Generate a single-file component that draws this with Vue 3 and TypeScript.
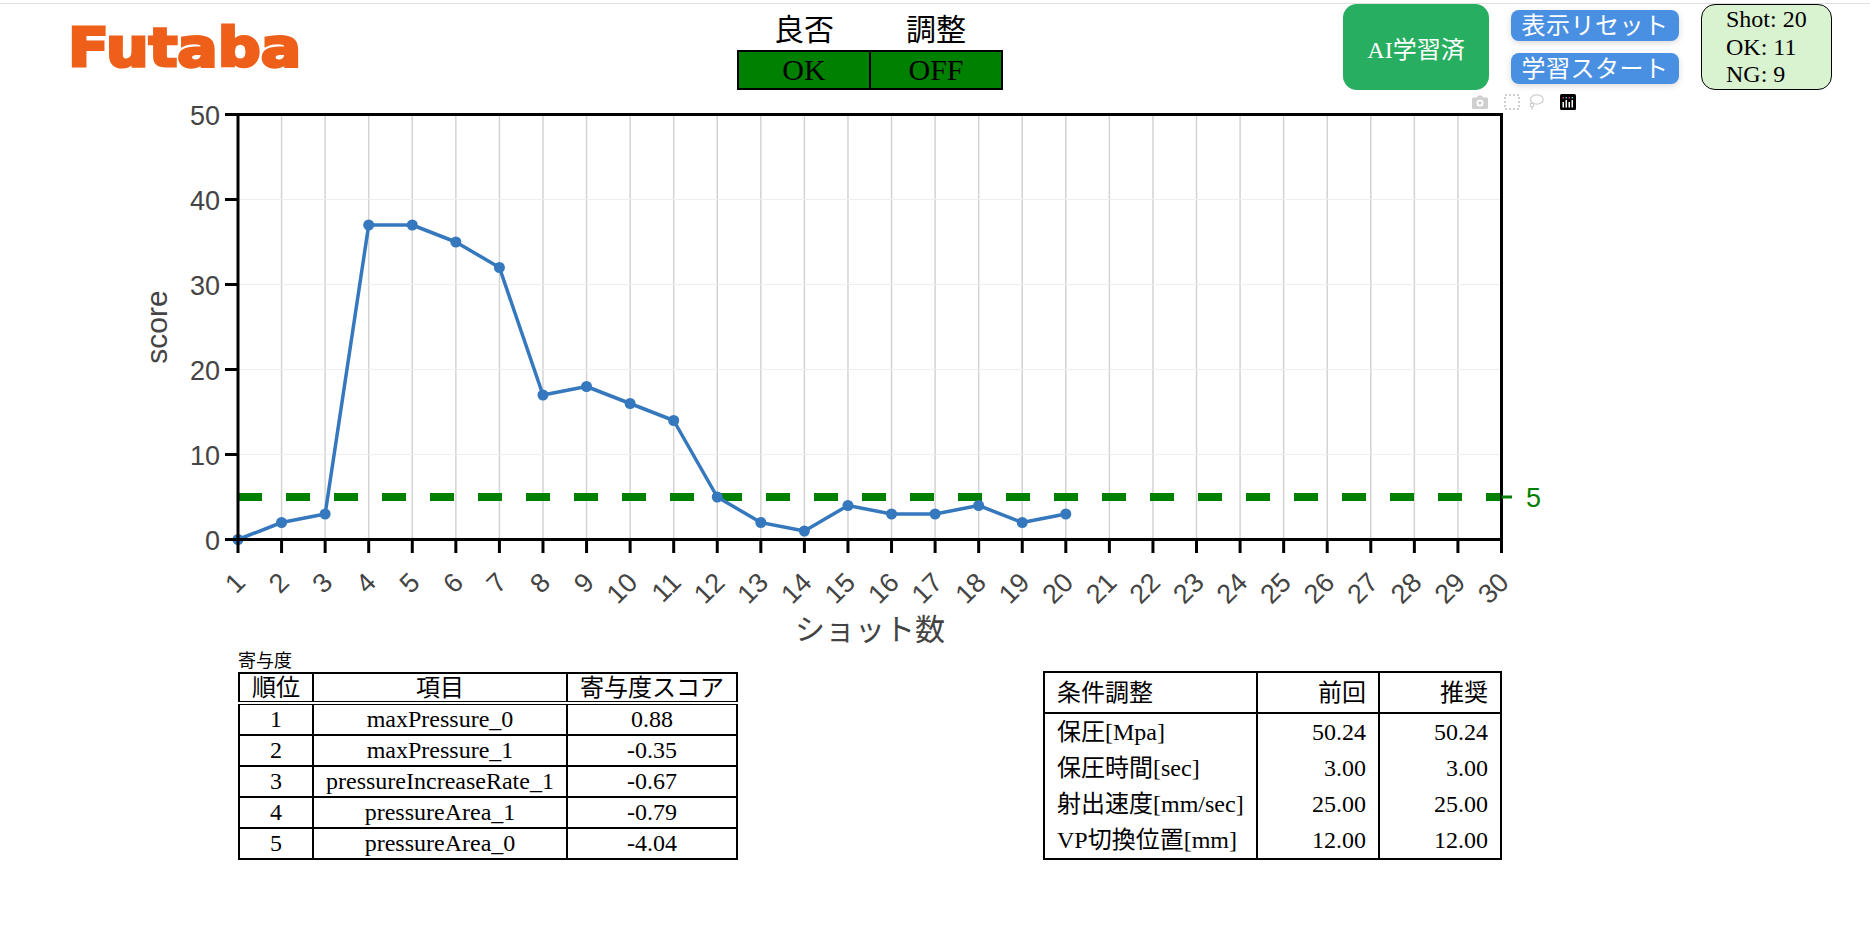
<script setup lang="ts">
/**
 * Score dashboard - header status, score chart, result tables
 */

import { computed } from 'vue'

const PLOT_LEFT = 238
const PLOT_RIGHT = 1501.5
const PLOT_TOP = 24.5
const PLOT_BOTTOM = 449.5

const scores = [0, 2, 3, 37, 37, 35, 32, 17, 18, 16, 14, 5, 2, 1, 4, 3, 3, 4, 2, 3]
const threshold = 5

function xAt(shot: number) {
  return PLOT_LEFT + ((shot - 1) * (PLOT_RIGHT - PLOT_LEFT)) / 29
}

function yAt(score: number) {
  return PLOT_BOTTOM - (score * (PLOT_BOTTOM - PLOT_TOP)) / 50
}

const shots = Array.from({ length: 30 }, (_, i) => i + 1)
const yTicks = [0, 10, 20, 30, 40, 50]

const points = computed(() => scores.map((s, i) => ({ x: xAt(i + 1), y: yAt(s) })))
const linePoints = computed(() => points.value.map((p) => `${p.x},${p.y}`).join(' '))

const contributions = [
  { rank: 1, name: 'maxPressure_0', score: '0.88' },
  { rank: 2, name: 'maxPressure_1', score: '-0.35' },
  { rank: 3, name: 'pressureIncreaseRate_1', score: '-0.67' },
  { rank: 4, name: 'pressureArea_1', score: '-0.79' },
  { rank: 5, name: 'pressureArea_0', score: '-4.04' },
]

const conditions = [
  { name: '保圧[Mpa]', prev: '50.24', next: '50.24' },
  { name: '保圧時間[sec]', prev: '3.00', next: '3.00' },
  { name: '射出速度[mm/sec]', prev: '25.00', next: '25.00' },
  { name: 'VP切換位置[mm]', prev: '12.00', next: '12.00' },
]
</script>

<template>
  <div class="page">
    <header class="header">
      <div class="logo">Futaba</div>

      <table class="status">
        <thead>
          <tr>
            <th>良否</th>
            <th>調整</th>
          </tr>
        </thead>
        <tbody>
          <tr>
            <td>OK</td>
            <td>OFF</td>
          </tr>
        </tbody>
      </table>

      <div class="ai-badge">AI学習済</div>

      <div class="actions">
        <button class="action">表示リセット</button>
        <button class="action">学習スタート</button>
      </div>

      <div class="counts">
        <div>Shot: 20</div>
        <div>OK: 11</div>
        <div>NG: 9</div>
      </div>
    </header>

    <div class="chart">
      <div class="modebar">
        <svg class="mode-icon mode-camera" viewBox="0 0 16 14">
          <path fill-rule="evenodd" d="M1.5 2.5H5L6 .5h4l1 2h3.5q1.5 0 1.5 1.5v8.5q0 1.5-1.5 1.5h-13Q0 14 0 12.500V4q0-1.500 1.500-1.500zM8 4.500a3.500 3.500 0 1 0 0 7 3.500 3.500 0 0 0 0-7zM8 6.200a1.800 1.800 0 1 1 0 3.600 1.800 1.800 0 0 1 0-3.600z" />
        </svg>
        <svg class="mode-icon mode-select" viewBox="0 0 16 16">
          <rect x="1" y="1" width="14" height="14" fill="none" stroke-width="2" stroke-dasharray="2 2" />
        </svg>
        <svg class="mode-icon mode-lasso" viewBox="0 0 16 16">
          <ellipse cx="8.800" cy="5.500" rx="6.400" ry="4.600" fill="none" stroke-width="1.300" />
          <circle cx="4" cy="11" r="1.800" fill="none" stroke-width="1.300" />
          <path d="M4 12.800c.6 1 .4 2-.6 2.700" fill="none" stroke-width="1.300" />
        </svg>
        <svg class="mode-logo" viewBox="0 0 16 16">
          <rect width="16" height="16" rx="1.500" fill="#000" />
          <g fill="#fff">
            <rect x="2.500" y="8" width="1.500" height="5.500" />
            <rect x="5.500" y="6" width="1.500" height="7.500" />
            <rect x="8.500" y="8" width="1.500" height="5.500" />
            <rect x="11.500" y="6" width="1.500" height="7.500" />
          </g>
          <g fill="#e6397a">
            <rect x="2.500" y="3" width="1.500" height="1.500" />
            <rect x="8.500" y="3" width="1.500" height="1.500" />
          </g>
          <g fill="#54b5e8">
            <rect x="5.500" y="3" width="1.500" height="1.500" />
            <rect x="11.500" y="3" width="1.500" height="1.500" />
          </g>
        </svg>
      </div>

      <svg class="plot" width="1870" height="560" viewBox="0 0 1870 560">
        <!-- grid -->
        <line v-for="s in shots" :key="'gx' + s" :x1="xAt(s)" :x2="xAt(s)" :y1="PLOT_TOP" :y2="PLOT_BOTTOM" stroke="#d3d3d3" stroke-width="1.500" />
        <line v-for="t in yTicks" :key="'gy' + t" :x1="PLOT_LEFT" :x2="PLOT_RIGHT" :y1="yAt(t)" :y2="yAt(t)" stroke="#eeeeee" stroke-width="1" />

        <!-- threshold -->
        <line :x1="PLOT_LEFT" :x2="PLOT_RIGHT" :y1="yAt(threshold)" :y2="yAt(threshold)" stroke="#008000" stroke-width="8" stroke-dasharray="24 24" />

        <!-- score trace -->
        <polyline :points="linePoints" fill="none" stroke="#3578bd" stroke-width="3.500" stroke-linejoin="round" />
        <circle v-for="(p, i) in points" :key="'pt' + i" :cx="p.x" :cy="p.y" r="5.500" fill="#3578bd" />

        <!-- frame -->
        <rect :x="PLOT_LEFT" :y="PLOT_TOP" :width="PLOT_RIGHT - PLOT_LEFT" :height="PLOT_BOTTOM - PLOT_TOP" fill="none" stroke="#000" stroke-width="3" />

        <!-- y axis -->
        <g v-for="t in yTicks" :key="'ty' + t">
          <line x1="225" :x2="PLOT_LEFT" :y1="yAt(t)" :y2="yAt(t)" stroke="#000" stroke-width="3" />
          <text class="tick" x="220" :y="yAt(t) + 10" text-anchor="end">{{ t }}</text>
        </g>
        <text class="axis-title" transform="translate(167 237) rotate(-90)" text-anchor="middle">score</text>

        <!-- x axis -->
        <g v-for="s in shots" :key="'tx' + s">
          <line :x1="xAt(s)" :x2="xAt(s)" :y1="PLOT_BOTTOM" y2="463" stroke="#000" stroke-width="3" />
          <text class="tick" :transform="`translate(${xAt(s) + 9} 494) rotate(-45)`" text-anchor="end">{{ s }}</text>
        </g>
        <text class="axis-title axis-title-cjk" x="870" y="550" text-anchor="middle">ショット数</text>

        <!-- threshold marker -->
        <line :x1="PLOT_RIGHT" x2="1512" :y1="yAt(threshold)" :y2="yAt(threshold)" stroke="#008000" stroke-width="3" />
        <text class="tick tick-green" x="1526" :y="yAt(threshold) + 10">{{ threshold }}</text>
      </svg>
    </div>

    <section class="tables">
      <div class="contrib">
        <div class="contrib-title">寄与度</div>
        <table class="grid">
          <thead>
            <tr>
              <th class="col-rank">順位</th>
              <th class="col-name">項目</th>
              <th class="col-score">寄与度スコア</th>
            </tr>
          </thead>
          <tbody>
            <tr v-for="row in contributions" :key="row.rank">
              <td>{{ row.rank }}</td>
              <td>{{ row.name }}</td>
              <td>{{ row.score }}</td>
            </tr>
          </tbody>
        </table>
      </div>

      <table class="adjust">
        <thead>
          <tr>
            <th class="adj-name">条件調整</th>
            <th class="adj-val">前回</th>
            <th class="adj-val">推奨</th>
          </tr>
        </thead>
        <tbody>
          <tr v-for="row in conditions" :key="row.name">
            <td class="adj-name">{{ row.name }}</td>
            <td class="adj-val">{{ row.prev }}</td>
            <td class="adj-val">{{ row.next }}</td>
          </tr>
        </tbody>
      </table>
    </section>
  </div>
</template>

<style scoped>
.page {
  width: 1870px;
  height: 932px;
  overflow: hidden;
  font-family: "Liberation Serif", "Noto Sans CJK JP", serif;
  color: #000;
}

.header {
  display: flex;
  align-items: flex-start;
  height: 86px;
  margin-top: 3px;
  border-top: 1px solid #e0e0e0;
  position: relative;
  z-index: 1;
}

.logo {
  width: 232px;
  margin: 19px 0 0 68px;
  font-family: "DejaVu Sans", sans-serif;
  font-weight: 700;
  font-size: 54px;
  line-height: 50px;
  color: #ee5f19;
  -webkit-text-stroke: 3px #ee5f19;
  transform: scaleX(1.11);
  transform-origin: left center;
}

.status {
  margin-left: 437px;
  border-collapse: collapse;
  font-size: 30px;
}

.status th {
  box-sizing: border-box;
  width: 132px;
  height: 46px;
  padding: 6px 0 0;
  font-weight: 400;
  font-size: 30px;
  line-height: 40px;
}

.status td {
  height: 36px;
  padding: 0;
  background: #008000;
  border: 2px solid #000;
  text-align: center;
  line-height: 34px;
}

.ai-badge {
  display: flex;
  align-items: center;
  justify-content: center;
  width: 146px;
  height: 86px;
  margin-left: 340px;
  border-radius: 14px;
  background: #27ae60;
  color: #fff;
  font-size: 24px;
}

.actions {
  display: flex;
  flex-direction: column;
  gap: 12px;
  margin: 6px 0 0 22px;
}

.action {
  width: 168px;
  height: 31px;
  padding: 2px 0 0;
  border: none;
  border-radius: 8px;
  background: #4a90e2;
  box-shadow: 0 2px 6px rgba(0, 0, 0, 0.15);
  color: #fff;
  font-family: inherit;
  font-size: 24px;
  letter-spacing: 0.5px;
  line-height: 29px;
  white-space: nowrap;
}

.counts {
  box-sizing: border-box;
  width: 131px;
  height: 86px;
  margin-left: 22px;
  padding: 1px 0 0 24px;
  border: 1px solid #000;
  border-radius: 14px;
  background: #d9f2d0;
  font-size: 24px;
  line-height: 27.500px;
}

.chart {
  position: relative;
  height: 560px;
}

.modebar {
  position: absolute;
  top: 4px;
  left: 1472px;
  display: flex;
  align-items: center;
}

.mode-icon {
  fill: #cfcfcf;
  stroke: #cfcfcf;
  stroke-width: 0;
}

.mode-camera {
  width: 16px;
  height: 14px;
}

.mode-select {
  width: 16px;
  height: 16px;
  margin-left: 16px;
}

.mode-lasso {
  width: 16px;
  height: 16px;
  margin-left: 8px;
}

.mode-logo {
  width: 16px;
  height: 16px;
  margin-left: 16px;
}

.plot {
  display: block;
}

.tick {
  font-family: "Liberation Sans", sans-serif;
  font-size: 27px;
  fill: #444;
}

.tick-green {
  fill: #008000;
}

.axis-title {
  font-family: "Liberation Sans", "Noto Sans CJK JP", sans-serif;
  font-size: 30px;
  fill: #444;
}

.tables {
  display: flex;
  align-items: flex-end;
  justify-content: space-between;
  width: 1264px;
  margin-left: 238px;
}

.contrib-title {
  font-size: 18px;
  line-height: 22px;
}

.grid,
.adjust {
  border-collapse: collapse;
  table-layout: fixed;
  border: 2px solid #000;
  font-size: 24px;
}

.grid {
  width: 498px;
}

.adjust {
  width: 458px;
}

.grid th,
.grid td {
  padding: 0;
  border: 2px solid #000;
  font-weight: 400;
  text-align: center;
  line-height: 26px;
}

.grid th {
  box-sizing: border-box;
  height: 30px;
  line-height: 24px;
  border-bottom: 4px double #000;
}

.grid td {
  height: 28px;
  padding-bottom: 1px;
}

.col-rank {
  width: 74px;
}

.col-name {
  width: 254px;
}

.col-score {
  width: 170px;
}

.adjust th,
.adjust td {
  padding: 0 12px;
  font-weight: 400;
  line-height: 26px;
  border-left: 2px solid #000;
}

.adjust th {
  height: 41px;
  border-bottom: 2px solid #000;
}

.adjust td {
  height: 36.500px;
}

.adj-name {
  box-sizing: border-box;
  width: 213px;
  text-align: left;
}

.adj-val {
  box-sizing: border-box;
  width: 122px;
  text-align: right;
}
</style>

<style>
html,
body {
  margin: 0;
  background: #fff;
}
</style>
